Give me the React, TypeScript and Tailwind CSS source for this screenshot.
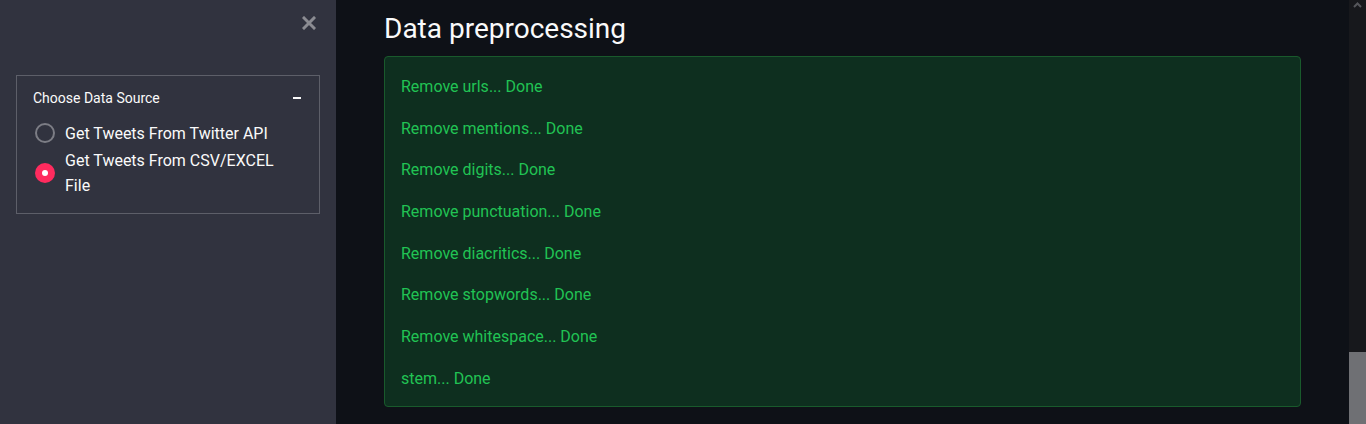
import React from 'react';

const steps = [
  'Remove urls... Done',
  'Remove mentions... Done',
  'Remove digits... Done',
  'Remove punctuation... Done',
  'Remove diacritics... Done',
  'Remove stopwords... Done',
  'Remove whitespace... Done',
  'stem... Done',
];

const sources = ['Get Tweets From Twitter API', 'Get Tweets From CSV/EXCEL File'];

const Radio: React.FC<{ checked: boolean }> = ({ checked }) =>
  checked ? (
    <span className="flex h-5 w-5 shrink-0 items-center justify-center rounded-full bg-[#ff2b5e]">
      <span className="h-[6px] w-[6px] rounded-full bg-white" />
    </span>
  ) : (
    <span className="h-5 w-5 shrink-0 rounded-full border-2 border-[#7c7d85]" />
  );

const Sidebar: React.FC = () => (
  <aside className="flex w-[336px] shrink-0 flex-col bg-[#31333f] px-4">
    <div className="flex h-[45px] items-center justify-end pr-[4px]">
      <svg width="14" height="14" viewBox="0 0 14 14" className="text-[#8b8c92]">
        <path d="M2 2 L12 12 M12 2 L2 12" stroke="currentColor" strokeWidth="3" strokeLinecap="square" />
      </svg>
    </div>
    <div className="mt-[30px] border border-[#5d5f69] px-4 pt-[12px] pb-[14px]">
      <div className="flex h-5 items-center justify-between text-[14px] text-[#fafafa]">
        <span>Choose Data Source</span>
        <span className="mr-[2px] h-[2px] w-[8px] bg-[#fafafa]" />
      </div>
      <div className="mt-[12px] flex flex-col">
        {sources.map((s, i) => (
          <label key={s} className="flex items-center gap-[10px] pl-[2px]">
            <Radio checked={i === 1} />
            <span className="max-w-[222px] pt-[1px] text-[16px] leading-[1.6] text-[#fafafa]">{s}</span>
          </label>
        ))}
      </div>
    </div>
  </aside>
);

const Scrollbar: React.FC = () => (
  <div className="flex w-[17px] shrink-0 flex-col justify-between bg-[#17181c]">
    <div className="flex h-[14px] items-start justify-center pt-[2px]">
      <svg width="9" height="6" viewBox="0 0 9 6">
        <path d="M1 5 L4.5 1.5 L8 5" stroke="#55565b" strokeWidth="2" fill="none" />
      </svg>
    </div>
    <div className="h-[72px] bg-[#6f7074]" />
  </div>
);

export default function App() {
  return (
    <div
      className="flex h-[424px] w-full overflow-hidden bg-[#0e1117]"
      style={{ fontFamily: 'Roboto, "Open Sans", sans-serif' }}
    >
      <Sidebar />
      <main className="flex-1 px-12 pt-[9px]">
        <h2 className="mb-[7px] text-[28px] leading-[40px] text-[#fafafa]">Data preprocessing</h2>
        <div className="rounded-[4px] border border-[#195a2c] bg-[#0e2f1f] px-4 pt-[17px] pb-[15px]">
          {steps.map((s, i) => (
            <p
              key={s}
              className={`text-[16px] leading-[1.6] text-[#21c354] ${i === steps.length - 1 ? '' : 'mb-[16.1px]'}`}
            >
              {s}
            </p>
          ))}
        </div>
      </main>
      <Scrollbar />
    </div>
  );
}
